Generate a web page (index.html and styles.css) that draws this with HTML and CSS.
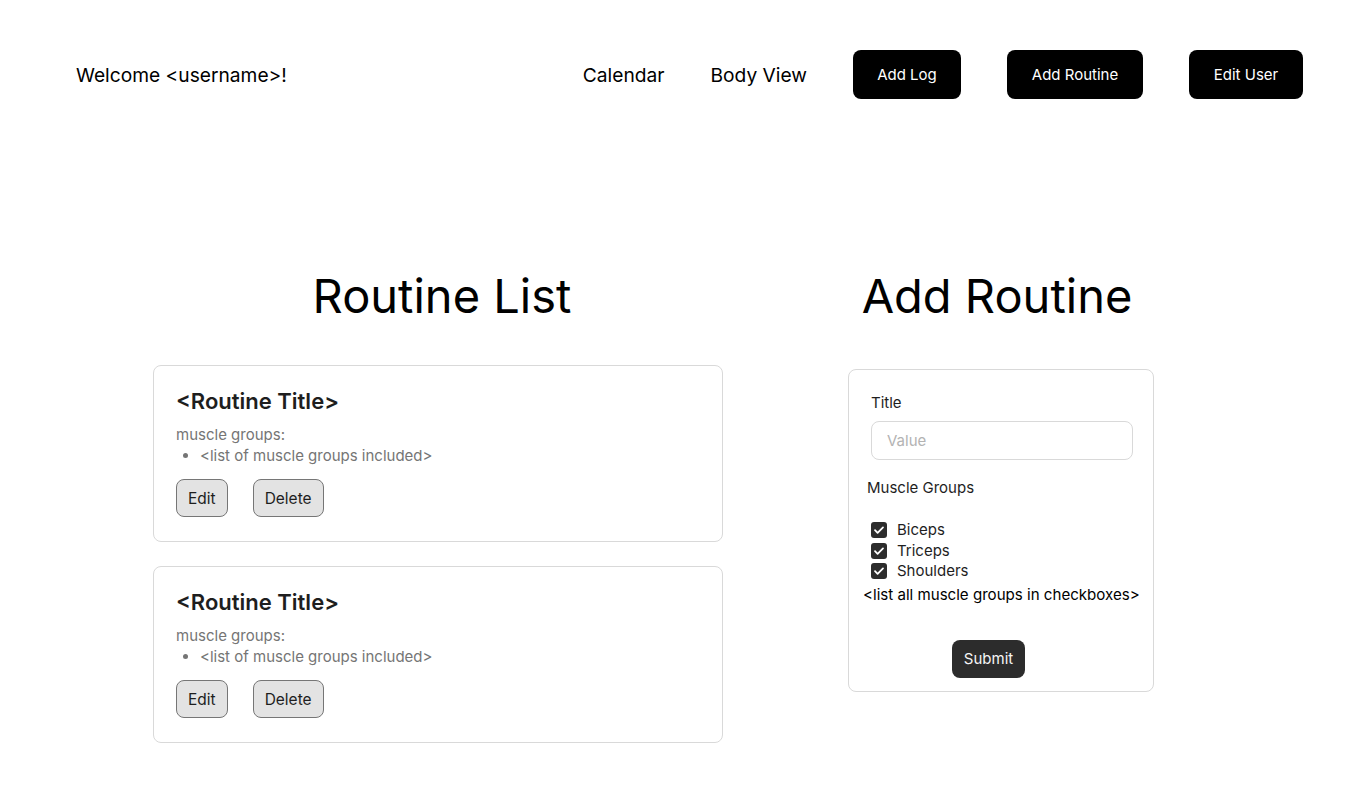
FILE: index.html
```html
<!DOCTYPE html>
<html lang="en">
<head>
<meta charset="utf-8">
<title>Routines</title>
<link rel="stylesheet" href="styles.css">
</head>
<body>
<header class="topbar">
  <div class="welcome">Welcome &lt;username&gt;!</div>
  <nav class="nav">
    <a class="nav-link" href="#">Calendar</a>
    <a class="nav-link" href="#">Body View</a>
    <button class="nav-btn btn-log">Add Log</button>
    <button class="nav-btn btn-routine">Add Routine</button>
    <button class="nav-btn btn-user">Edit User</button>
  </nav>
</header>

<main class="main">
  <section class="col col-list">
    <h1 class="heading">Routine List</h1>
    <div class="cards">
      <article class="card">
        <h2 class="card-title">&lt;Routine Title&gt;</h2>
        <p class="card-label">muscle groups:</p>
        <ul class="card-list"><li>&lt;list of muscle groups included&gt;</li></ul>
        <div class="card-actions">
          <button class="btn-ghost">Edit</button>
          <button class="btn-ghost">Delete</button>
        </div>
      </article>
      <article class="card">
        <h2 class="card-title">&lt;Routine Title&gt;</h2>
        <p class="card-label">muscle groups:</p>
        <ul class="card-list"><li>&lt;list of muscle groups included&gt;</li></ul>
        <div class="card-actions">
          <button class="btn-ghost">Edit</button>
          <button class="btn-ghost">Delete</button>
        </div>
      </article>
    </div>
  </section>

  <section class="col col-form">
    <h1 class="heading heading-form">Add Routine</h1>
    <form class="form-card">
      <label class="field-label" for="title">Title</label>
      <input class="field-input" id="title" type="text" placeholder="Value">
      <div class="group-label">Muscle Groups</div>
      <div class="checks">
        <label class="check"><span class="box"><svg viewBox="0 0 16 16" width="16" height="16"><path d="M4 8.2l2.6 2.6L12 5.4" fill="none" stroke="#fff" stroke-width="1.8" stroke-linecap="round" stroke-linejoin="round"/></svg></span>Biceps</label>
        <label class="check"><span class="box"><svg viewBox="0 0 16 16" width="16" height="16"><path d="M4 8.2l2.6 2.6L12 5.4" fill="none" stroke="#fff" stroke-width="1.8" stroke-linecap="round" stroke-linejoin="round"/></svg></span>Triceps</label>
        <label class="check"><span class="box"><svg viewBox="0 0 16 16" width="16" height="16"><path d="M4 8.2l2.6 2.6L12 5.4" fill="none" stroke="#fff" stroke-width="1.8" stroke-linecap="round" stroke-linejoin="round"/></svg></span>Shoulders</label>
      </div>
      <div class="all-note">&lt;list all muscle groups in checkboxes&gt;</div>
      <div class="submit-row"><button class="submit" type="button">Submit</button></div>
    </form>
  </section>
</main>
</body>
</html>
```
FILE: styles.css
```css
* { box-sizing: border-box; }
html, body { margin: 0; padding: 0; background: #fff; }
body {
  font-family: Inter, "Noto Sans", "Liberation Sans", sans-serif;
  color: #000;
}

.topbar {
  display: flex;
  align-items: center;
  justify-content: space-between;
  padding: 50px 69px 0 76px;
  height: 99px;
}
.welcome { font-size: 19.2px; }
.nav { display: flex; align-items: center; gap: 46px; }
.nav-link { font-size: 19.2px; color: #000; text-decoration: none; }
.nav-btn {
  height: 49px;
  border: none;
  border-radius: 8px;
  background: #000;
  color: #fff;
  font-family: inherit;
  font-size: 15px;
  padding: 0 23px;
}
.btn-log { width: 108px; }
.btn-routine { width: 136px; }
.btn-user { width: 114px; }

.main {
  display: grid;
  grid-template-columns: 570px 306px;
  column-gap: 125px;
  padding: 0 0 0 153px;
  margin-top: 168px;
  align-items: start;
}
.col { display: flex; flex-direction: column; }
.heading {
  margin: 0;
  font-size: 47px;
  font-weight: 400;
  line-height: 58px;
  text-align: center;
  padding-left: 8px;
}
.heading-form { padding-left: 0; padding-right: 8px; }

.cards { display: flex; flex-direction: column; gap: 24px; margin-top: 40px; }
.card {
  border: 1px solid #d9d9d9;
  border-radius: 8px;
  padding: 22px 23px 22px 22px;
  height: 177px;
}
.card-title {
  margin: 0;
  font-size: 22px;
  font-weight: 600;
  line-height: 27px;
  color: #1e1e1e;
}
.card-label {
  margin: 9px 0 0;
  font-size: 15px;
  line-height: 21px;
  color: #757575;
}
.card-list {
  margin: 0;
  padding-left: 24px;
  font-size: 15px;
  line-height: 21px;
  color: #757575;
}
.card-actions { display: flex; gap: 25px; margin-top: 13px; }
.btn-ghost {
  height: 38px;
  padding: 0 11px;
  font-family: inherit;
  font-size: 15.5px;
  color: #1e1e1e;
  background: #e3e3e3;
  border: 1px solid #767676;
  border-radius: 8px;
}

.form-card {
  margin-top: 44px;
  border: 1px solid #d9d9d9;
  border-radius: 8px;
  padding: 23px 21px 13px 22px;
  height: 323px;
  display: flex;
  flex-direction: column;
  font-size: 15px;
  color: #1e1e1e;
}
.field-label { line-height: 20px; }
.field-input {
  margin-top: 8px;
  height: 39px;
  width: 262px;
  border: 1px solid #d9d9d9;
  border-radius: 8px;
  padding: 0 15px;
  font-family: inherit;
  font-size: 15px;
  outline: none;
}
.field-input::placeholder { color: #b3b3b3; }
.group-label { margin-top: 18px; margin-left: -4px; line-height: 20px; }
.checks { margin-top: 22px; display: flex; flex-direction: column; }
.check { display: flex; align-items: center; gap: 10px; line-height: 20.5px; font-size: 15px; }
.box {
  width: 16px; height: 16px;
  background: #2c2c2c;
  border-radius: 3px;
  display: inline-flex;
}
.all-note { margin-top: 3px; margin-left: -8px; line-height: 20px; font-size: 15.1px; color: #000; white-space: nowrap; }
.submit-row { margin-top: 35px; display: flex; justify-content: center; padding-right: 26px; }
.submit {
  height: 38px;
  padding: 0 12px;
  border: none;
  border-radius: 8px;
  background: #2c2c2c;
  color: #f5f5f5;
  font-family: inherit;
  font-size: 15px;
}
```
